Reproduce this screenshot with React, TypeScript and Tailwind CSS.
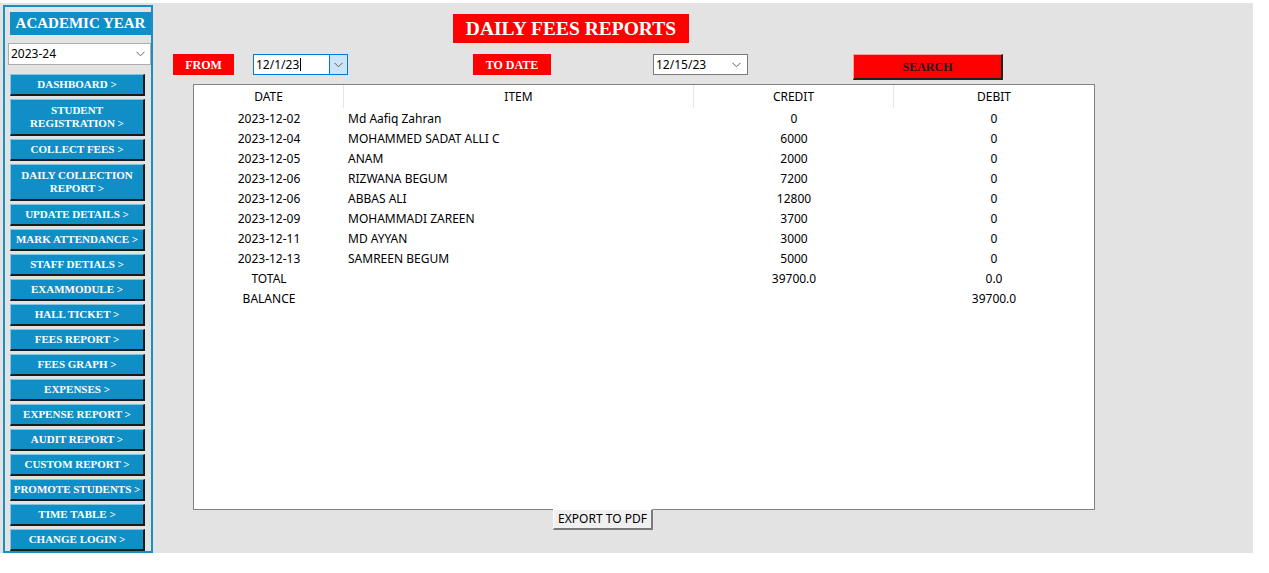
import type React from "react";

const menu: { label: string[] }[] = [
	{ label: ["DASHBOARD >"] },
	{ label: ["STUDENT", "REGISTRATION >"] },
	{ label: ["COLLECT FEES >"] },
	{ label: ["DAILY COLLECTION", "REPORT >"] },
	{ label: ["UPDATE DETAILS >"] },
	{ label: ["MARK ATTENDANCE >"] },
	{ label: ["STAFF DETIALS >"] },
	{ label: ["EXAMMODULE >"] },
	{ label: ["HALL TICKET >"] },
	{ label: ["FEES REPORT >"] },
	{ label: ["FEES GRAPH >"] },
	{ label: ["EXPENSES >"] },
	{ label: ["EXPENSE REPORT >"] },
	{ label: ["AUDIT REPORT >"] },
	{ label: ["CUSTOM REPORT >"] },
	{ label: ["PROMOTE STUDENTS >"] },
	{ label: ["TIME TABLE >"] },
	{ label: ["CHANGE LOGIN >"] },
];

const rows = [
	["2023-12-02", "Md Aafiq Zahran", "0", "0"],
	["2023-12-04", "MOHAMMED SADAT ALLI C", "6000", "0"],
	["2023-12-05", "ANAM", "2000", "0"],
	["2023-12-06", "RIZWANA BEGUM", "7200", "0"],
	["2023-12-06", "ABBAS ALI", "12800", "0"],
	["2023-12-09", "MOHAMMADI ZAREEN", "3700", "0"],
	["2023-12-11", "MD AYYAN", "3000", "0"],
	["2023-12-13", "SAMREEN BEGUM", "5000", "0"],
	["TOTAL", "", "39700.0", "0.0"],
	["BALANCE", "", "", "39700.0"],
];

const serif = "font-['Liberation_Serif',serif] font-bold";
const ui = "font-['Noto_Sans',sans-serif]";

const Chevron = (): React.ReactElement => (
	<svg width="9" height="6" viewBox="0 0 9 6" fill="none">
		<path d="M0.5 0.8 L4.5 4.8 L8.5 0.8" stroke="#606060" strokeWidth="1" />
	</svg>
);

const MenuButton = ({ label }: { label: string[] }): React.ReactElement => {
	const tall = label.length > 1;
	return (
		<button
			type="button"
			className={`${serif} ${tall ? "h-[37px]" : "h-[22px]"} w-[135px] flex flex-col items-center justify-center bg-[#108fc6] text-white text-[11px] leading-[13px] border-t border-l border-t-[#7cc6e6] border-l-[#7cc6e6] border-b-2 border-r-2 border-b-[#1a1a1a] border-r-[#1a1a1a]`}
		>
			{label.map((l) => (
				<span key={l}>{l}</span>
			))}
		</button>
	);
};

const RedLabel = ({ text, width }: { text: string; width: string }): React.ReactElement => (
	<div className={`${serif} ${width} h-[21px] bg-[#ff0000] text-white text-[12px] flex items-center justify-center`}>
		{text}
	</div>
);

export default function App(): React.ReactElement {
	return (
		<div className="w-[1269px] h-[573px] bg-white overflow-hidden">
			<div className="mt-[3px] w-[1253px] h-[550px] bg-[#e3e3e3] flex">
				{/* sidebar */}
				<aside className="ml-[3px] mt-[2px] w-[150px] h-[548px] border-2 border-[#1a8fc4] flex flex-col pt-[5px]">
					<div className={`${serif} ml-[5px] w-[141px] h-[23px] bg-[#108fc6] text-white text-[15px] flex items-center justify-center`}>
						ACADEMIC YEAR
					</div>
					<div className={`${ui} mt-[8px] ml-[3px] w-[143px] h-[23px] bg-white border border-[#adadad] flex items-center justify-between pl-[2px] pr-[5px] text-[12px] text-black`}>
						<span>2023-24</span>
						<Chevron />
					</div>
					<nav className="mt-[9px] ml-[5px] flex flex-col gap-[3px]">
						{menu.map((m) => (
							<MenuButton key={m.label.join(" ")} label={m.label} />
						))}
					</nav>
				</aside>

				{/* main */}
				<main className="flex-1 flex flex-col pt-[11px]">
					<div className={`${serif} ml-[300px] w-[236px] h-[29px] bg-[#ff0000] text-white text-[19.5px] flex items-center justify-center`}>
						DAILY FEES REPORTS
					</div>

					<div className="mt-[11px] h-[26px] flex items-start">
						<div className="ml-[20px]">
							<RedLabel text="FROM" width="w-[61px]" />
						</div>
						<div className={`${ui} ml-[19px] w-[95px] h-[21px] bg-white border border-[#0078d7] flex items-center text-[12px] text-black`}>
							<span className="pl-[2px] flex-1 flex items-center">
								12/1/23
								<span className="ml-[1px] w-px h-[13px] bg-black" />
							</span>
							<span className="w-[18px] h-full bg-[#cce4f7] border-l border-[#0078d7] flex items-center justify-center">
								<Chevron />
							</span>
						</div>
						<div className="ml-[125px]">
							<RedLabel text="TO DATE" width="w-[78px]" />
						</div>
						<div className={`${ui} ml-[102px] w-[95px] h-[21px] bg-white border border-[#7a7a7a] flex items-center justify-between pl-[2px] pr-[6px] text-[12px] text-black`}>
							<span>12/15/23</span>
							<Chevron />
						</div>
						<button
							type="button"
							className={`${serif} ml-[105px] w-[150px] h-[26px] bg-[#ff0000] text-[#1c1c1c] text-[12px] flex items-center justify-center border-t border-l border-t-[#ff9a9a] border-l-[#ff9a9a] border-b-2 border-r-2 border-b-[#222] border-r-[#222]`}
						>
							SEARCH
						</button>
					</div>

					{/* table */}
					<div className={`${ui} ml-[40px] mt-[4px] w-[902px] h-[426px] bg-white border border-[#828282] text-[12px] text-black`}>
						<div className="grid grid-cols-[150px_350px_200px_200px] h-[23px]">
							<div className="flex items-center justify-center border-r border-[#e5e5e5]">DATE</div>
							<div className="flex items-center justify-center border-r border-[#e5e5e5]">ITEM</div>
							<div className="flex items-center justify-center border-r border-[#e5e5e5]">CREDIT</div>
							<div className="flex items-center justify-center">DEBIT</div>
						</div>
						<div className="pt-[1px]">
							{rows.map((r, i) => (
								<div key={i} className="grid grid-cols-[150px_350px_200px_200px] h-[20px] items-center">
									<div className="text-center">{r[0]}</div>
									<div className="pl-[4px]">{r[1]}</div>
									<div className="text-center">{r[2]}</div>
									<div className="text-center">{r[3]}</div>
								</div>
							))}
						</div>
					</div>

					<button
						type="button"
						className={`${ui} ml-[400px] -mt-[1px] w-[100px] h-[21px] bg-[#f0f0f0] text-[12px] text-black flex items-center justify-center border-t border-l border-t-white border-l-white border-b-2 border-r-2 border-b-[#7a7a7a] border-r-[#7a7a7a]`}
					>
						EXPORT TO PDF
					</button>
				</main>
			</div>
		</div>
	);
}
